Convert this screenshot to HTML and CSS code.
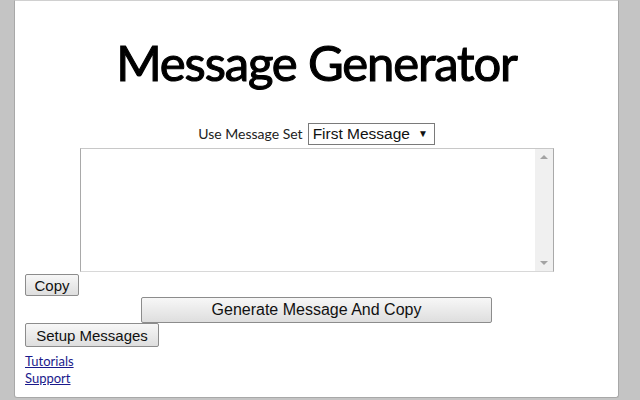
FILE: index.html
```html
<!DOCTYPE html>
<html>
<head>
<meta charset="utf-8">
<link rel="stylesheet" href="styles.css">
</head>
<body>
<div class="dialog">
  <h1 class="title">Message Generator</h1>
  <div class="set-row">
    <span class="set-label">Use Message Set</span>
    <span class="select">First Message <span class="caret">&#9660;</span></span>
  </div>
  <div class="ta-row">
    <div class="textarea">
      <div class="scroll">
        <span class="arrow up"></span>
        <span class="arrow down"></span>
      </div>
    </div>
  </div>
  <div class="row-left"><button class="btn btn-copy">Copy</button></div>
  <div class="row-center"><button class="btn btn-gen">Generate Message And Copy</button></div>
  <div class="row-left tight"><button class="btn btn-setup">Setup Messages</button></div>
  <div class="links">
    <a href="#" class="link">Tutorials</a>
    <a href="#" class="link">Support</a>
  </div>
</div>
</body>
</html>
```
FILE: styles.css
```css
html, body {
  margin: 0;
  padding: 0;
  background: #c4c4c4;
  width: 640px;
  height: 400px;
  overflow: hidden;
}
.dialog {
  box-sizing: border-box;
  margin-left: 14px;
  width: 605px;
  height: 398px;
  background: #fff;
  border: 1px solid #a8a8a8;
  border-top-color: #d0d0d0;
  border-radius: 0 0 3px 3px;
  padding: 0 0 0 10px;
  display: flex;
  flex-direction: column;
}
.title {
  margin: 33px 0 0 0;
  padding-right: 10px;
  text-align: center;
  font-family: Lato, "Open Sans", sans-serif;
  font-weight: 400;
  font-size: 49px;
  letter-spacing: -1.15px;
  -webkit-text-stroke: 1.1px #000;
  line-height: 56px;
  color: #000;
  height: 56px;
}
.set-row {
  margin-top: 32px;
  padding-right: 10px;
  display: flex;
  justify-content: center;
  align-items: center;
  gap: 5px;
  height: 23px;
}
.set-label {
  font-family: Lato, sans-serif;
  font-size: 14px;
  color: #222;
}
.select {
  box-sizing: border-box;
  height: 22px;
  width: 127px;
  border: 1px solid #7a7a7a;
  font-family: "Liberation Sans", Arial, sans-serif;
  font-size: 15.5px;
  color: #111;
  padding: 0 0 0 4px;
  display: flex;
  align-items: center;
  gap: 8px;
}
.caret {
  font-size: 10px;
}
.ta-row {
  margin-top: 3px;
  padding-right: 10px;
  display: flex;
  justify-content: center;
}
.textarea {
  box-sizing: border-box;
  width: 474px;
  height: 124px;
  border: 1px solid #a9a9a9;
  border-top-color: #c8c8c8;
  border-bottom-color: #d8d8d8;
  display: flex;
  justify-content: flex-end;
}
.scroll {
  width: 18px;
  background: #f0f0f0;
  display: flex;
  flex-direction: column;
  justify-content: space-between;
  align-items: center;
  padding: 6px 0;
}
.arrow {
  width: 0;
  height: 0;
  border-left: 4px solid transparent;
  border-right: 4px solid transparent;
}
.arrow.up { border-bottom: 4px solid #a3a3a3; }
.arrow.down { border-top: 4px solid #a3a3a3; }
.row-left {
  display: flex;
  margin-top: 2px;
}
.row-left.tight {
  margin-top: 0;
}
.row-center {
  display: flex;
  justify-content: center;
  padding-right: 10px;
  margin-top: 1px;
}
.btn {
  box-sizing: border-box;
  font-family: "Liberation Sans", Arial, sans-serif;
  font-size: 15px;
  color: #111;
  background: linear-gradient(#f7f7f7, #dedede);
  border: 1px solid #8c8c8c;
  border-radius: 2px;
  padding: 0 8px;
  margin: 0;
}
.btn-copy { width: 54px; height: 22px; }
.btn-gen { width: 351px; height: 26px; font-size: 16px; }
.btn-setup { width: 134px; height: 24px; }
.links {
  margin-top: 6px;
  display: flex;
  flex-direction: column;
  align-items: flex-start;
}
.link {
  font-family: Lato, sans-serif;
  font-size: 13px;
  line-height: 17px;
  color: #1a1a8c;
}
```
